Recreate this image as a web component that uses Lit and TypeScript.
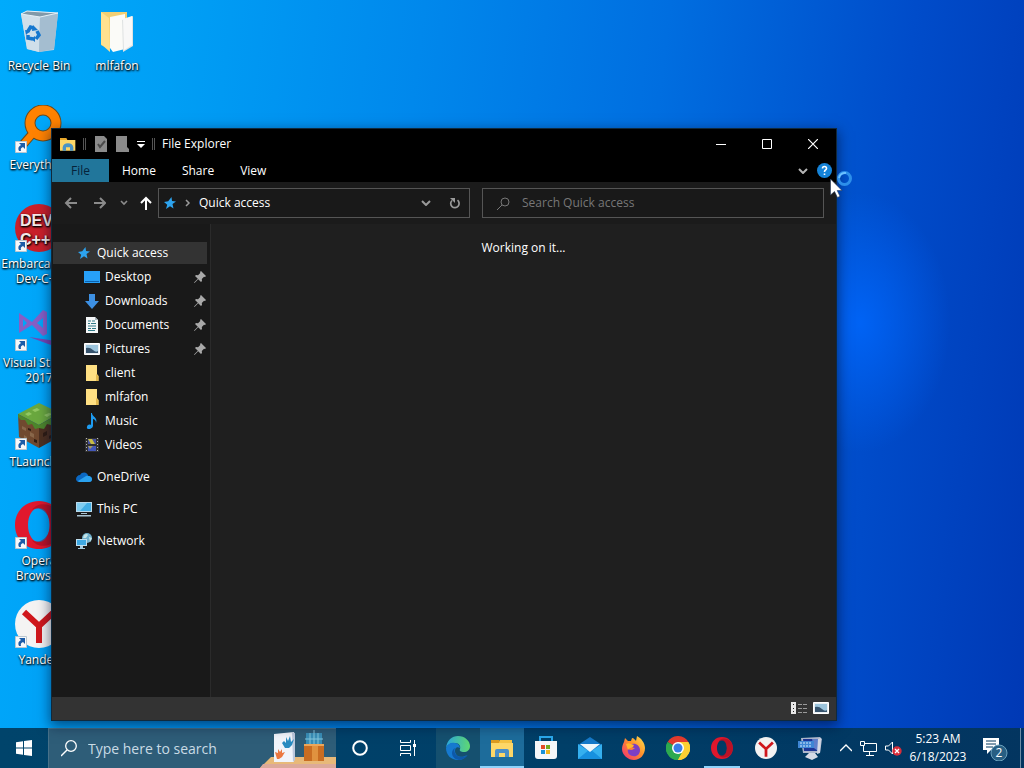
import { LitElement, html, css, nothing, TemplateResult } from "lit";
import { customElement } from "lit/decorators.js";
import { classMap } from "lit/directives/class-map.js";

const folder = html`<svg width="16" height="16" viewBox="0 0 16 16"><path d="M2 0h11v9l1.500 2v5H2z" fill="#ffe083"/><path d="M12 9l2.500 2v5H12z" fill="#e3b94e"/></svg>`;

const explorer = html`<svg width="24" height="24" viewBox="0 0 24 24"><path d="M1 4h8l2 2h11v4H1z" fill="#dc9b20"/><path d="M1 7h22v14H1z" fill="#fdd768"/><path d="M10 4h12v3H9z" fill="#f5c344"/><path d="M5 21v-6q0-2 2-2h10q2 0 2 2v6h-4v-4H9v4z" fill="#4a8fc8"/></svg>`;

const opera = (size: number) => html`<svg width=${size} height=${size} viewBox="0 0 48 48"><path fill-rule="evenodd" fill="#e0182d" d="M24 0C10 0 0 10.500 0 24s10 24 24 24 24-10.500 24-24S38 0 24 0zm0 7c6.500 0 10.500 7.500 10.500 17S30.500 41 24 41s-11-7.500-11-17S17.500 7 24 7z"/><path d="M17 9C22 1 34 2 41 8c9 9 9 23 0 32-7 6-19 7-24-1 8 5 18-3 18-15S25 4 17 9z" fill="#9d0e20" opacity=".55"/></svg>`;

const yandex = (size: number) => html`<svg width=${size} height=${size} viewBox="0 0 48 48"><circle cx="24" cy="24" r="24" fill="#f4f3f3"/><path d="M9 12l15 14 15-14M24 26v17" fill="none" stroke="#d0171c" stroke-width="6"/></svg>`;

const star = html`<svg width="14" height="14" viewBox="0 0 14 14"><path d="M8.500 1l.5 4 4 .5-3.500 2.500 1 4.500-3.500-2.200L3 13l1.200-4.300L1 6l4.200-.8z" fill="#2da3ee"/></svg>`;

const pin = html`<svg class="pin" width="12" height="12" viewBox="0 0 12 12"><path d="M7 0l5 5-1 1-1-.3L7.800 8 8 10l-1 1-2.800-2.800L.5 12 0 11.500l3.800-3.700L1 5l1-1 2 .2L6.300 2 6 1z" fill="#a9a9a9"/></svg>`;

const thumb = html`<svg width="16" height="12" viewBox="0 0 16 12"><path d="M.5.500h15v11H.5z" fill="#e9eef2" stroke="#fff"/><path d="M2 2h12v8H2z" fill="#9cc4dc"/><path d="M2 5q4-1 7 2t5 1v2H2z" fill="#36536d"/></svg>`;

const chevron = html`<svg width="10" height="6" viewBox="0 0 10 6"><path d="M1 1l4 4 4-4" fill="none" stroke="currentColor" stroke-width="2"/></svg>`;

const desktopIcons: { label: string; icon: TemplateResult; link?: boolean }[] = [
  {
    label: "Recycle Bin",
    icon: html`<svg width="48" height="48" viewBox="0 0 48 48"><path d="M6 8l6-3 31 2-4 37-15 2-12-3z" fill="#b9cfdf"/><path d="M6 8l19 3-1 35-12-3z" fill="#d0dfea"/><path d="M25 11l18-4-4 36-15 3z" fill="#a4bdd0"/><path d="M6 8l6-3 31 2-18 4z" fill="#8199a9" stroke="#e5f0f7"/><g fill="none" stroke="#1577cf" stroke-width="3.500"><path d="M12.500 26l3-5 3 1"/><path d="M22 25l2 4-3 4"/><path d="M18 33l-5-1v-3"/></g><path d="M18 19l5 5-6 1zM20 30l0 6-4-3zM10 24l5 1-4 4z" fill="#1577cf"/></svg>`,
  },
  {
    label: "Everything",
    link: true,
    icon: html`<svg width="48" height="48" viewBox="0 0 48 48"><circle cx="28" cy="18" r="13" fill="none" stroke="#6c4a1c" stroke-width="11"/><path d="M18 28L5 43" stroke="#6c4a1c" stroke-width="9"/><circle cx="28" cy="18" r="13" fill="none" stroke="#ff8201" stroke-width="9"/><path d="M19 27L6 42" stroke="#ff8201" stroke-width="7"/></svg>`,
  },
  {
    label: "Embarcadero Dev-C++",
    link: true,
    icon: html`<svg width="48" height="48" viewBox="0 0 48 48"><circle cx="24" cy="24" r="24" fill="#c9202a"/><g fill="#f5e9e9" font-family="Liberation Sans, sans-serif" font-weight="700" font-size="16"><text x="5" y="22">DEV</text><text x="5" y="41">C++</text></g></svg>`,
  },
  {
    label: "Visual Studio 2017",
    link: true,
    icon: html`<svg width="48" height="48" viewBox="0 0 48 48"><path d="M4 10l13 9L28 7l4 2v22l-4 2-11-11-13 8zM8 16v8l4-4zM28 15l-6 5 6 5z" fill="#865fc5" fill-rule="evenodd"/><path d="M14 34l34 5v6l-12-3z" fill="#7447b5"/></svg>`,
  },
  {
    label: "TLauncher",
    link: true,
    icon: html`<svg width="48" height="48" viewBox="0 0 48 48"><path d="M3 12l21-11 21 10-21 12z" fill="#6aa83f"/><path d="M3 12l21 11v23L4 35z" fill="#70492f"/><path d="M24 23l21-12-1 24-20 11z" fill="#4c3020"/><path d="M3 12l21 11 21-12v5l-3 3-3-1-3 5-4-1-3 5-5-1-4 1-3-5-4 1-3-5-4 0-3-3z" fill="#4d862c"/><g fill="#89674a"><path d="M7 24l4 2v3l-4-2zM15 30l4 2v4l-4-2zM9 33l3 2v2l-3-1z"/></g><g fill="#2f1d13"><path d="M28 31l4-2v4l-4 2zM36 25l4-2v4l-4 2zM13 26l3 1v2l-3-1zM34 34l4-2v3l-4 2zM19 37l3 1v3l-3-1z"/></g><g fill="#91c763"><path d="M17 8l5-2 3 2-5 2zM29 13l5-2 3 1-5 3zM10 12l4-2 3 2-4 2z"/></g></svg>`,
  },
  { label: "Opera Browser", link: true, icon: opera(48) },
  { label: "Yandex", link: true, icon: yandex(48) },
];

const pinnedItems: { label: string; icon: TemplateResult; pinned?: boolean }[] = [
  { label: "Desktop", pinned: true, icon: html`<svg width="16" height="12" viewBox="0 0 16 12"><path d="M0 0h16v12H0z" fill="#27a0f8"/><path d="M1 10h14v1H1z" fill="#0c62ae"/></svg>` },
  { label: "Downloads", pinned: true, icon: html`<svg width="16" height="16" viewBox="0 0 16 16"><path d="M5 1h6v7h4l-7 8-7-8h4z" fill="#3d90e3"/></svg>` },
  { label: "Documents", pinned: true, icon: html`<svg width="16" height="16" viewBox="0 0 16 16"><path d="M2 0h9l3 3v13H2z" fill="#f5f7f8"/><path d="M11 0l3 3h-3z" fill="#aab6bd"/><path d="M4 4h3M8 4h3M4 6.500h2M7 6.500h5M4 9h8M4 11.500h3M8 11.500h4M4 13.500h7" stroke="#327b88" stroke-width="1.200"/></svg>` },
  { label: "Pictures", pinned: true, icon: thumb },
  { label: "client", icon: folder },
  { label: "mlfafon", icon: folder },
  { label: "Music", icon: html`<svg width="16" height="16" viewBox="0 0 16 16"><path d="M8 0c0 4 6 4 4 10 0-3-2-4-3-4v7c-1 4-7 4-6 1 0-2 2-3 4-2V0z" fill="#1d9bf0"/></svg>` },
  { label: "Videos", icon: html`<svg width="16" height="16" viewBox="0 0 16 16"><path d="M1 1h14v14H1z" fill="#303030"/><path d="M2.500 1v15M13.500 1v15" stroke="#b5b5b5" stroke-width="1" stroke-dasharray="1 2"/><path d="M4 2h8v5H4z" fill="#4651a3"/><path d="M4 2h4l3 5H7z" fill="#c8bc43"/><path d="M4 9h8v5H4z" fill="#4357b8"/><path d="M4 9h5l-3 3z" fill="#a59a60"/></svg>` },
];

const roots: { label: string; icon: TemplateResult }[] = [
  { label: "OneDrive", icon: html`<svg width="16" height="12" viewBox="0 0 16 12"><path d="M4 4c2-4 8-3 8 1 3 0 4 2 4 3 0 2-1 3-3 3H3c-2 0-3-2-3-3 0-2 2-4 4-4z" fill="#0b68c2"/><path d="M2 10l8-5c3-1 6 1 6 3s-1 3-3 3H3z" fill="#2aa1ee"/></svg>` },
  { label: "This PC", icon: html`<svg width="16" height="16" viewBox="0 0 16 16"><path d="M0 1h16v10H0z" fill="#b9d9ea"/><path d="M1 2h14v8H1z" fill="#43aee4"/><path d="M1 2h10L4 10H1z" fill="#80cdf0"/><path d="M5 12h6v1H5zM1 14h14v1.500H1z" fill="#a8c3d2"/></svg>` },
  { label: "Network", icon: html`<svg width="16" height="16" viewBox="0 0 16 16"><circle cx="11" cy="5" r="5" fill="#6fb0cd"/><path d="M8 2q3-2 4 0l-2 3H7zM13 4l3 1-2 4z" fill="#c4e3e6"/><path d="M0 6h11v7H0z" fill="#c0dfef"/><path d="M1 7h9v5H1z" fill="#3fa9e3"/><path d="M4 13h3v2h2v1H2v-1h2z" fill="#a8cde0"/></svg>` },
];

const apps: { name: string; state?: string; icon: TemplateResult }[] = [
  { name: "Microsoft Edge", state: "hover", icon: html`<svg width="24" height="24" viewBox="0 0 24 24"><defs><linearGradient id="eg" x1="0" y1="0" x2="1" y2="0"><stop offset="0" stop-color="#2ba7df"/><stop offset="1" stop-color="#5fd871"/></linearGradient></defs><path d="M0 12C1 4 6 0 12 0c7 0 12 5 12 10 0 4-3 6-6 6-3 0-5-1-4-3 1-3-1-6-5-6-4 0-8 2-9 5z" fill="url(#eg)"/><path d="M0 12c1-4 5-6 9-5 3 0 5 3 5 5-3-2-5 0-5 3 0 5 6 8 12 4-2 3-5 5-9 5C5 24 0 19 0 12z" fill="#1679cf"/><path d="M9 12c-2 4 1 9 7 9 2 0 4-1 6-2-2 3-6 5-9 5-5-1-7-4-7-7 0-2 1-4 3-5z" fill="#0d58a9"/></svg>` },
  { name: "File Explorer", state: "active", icon: explorer },
  { name: "Microsoft Store", icon: html`<svg width="24" height="24" viewBox="0 0 24 24"><path d="M6 6V1h12v5" fill="none" stroke="#2aa8ec" stroke-width="2"/><path d="M1 5h22v15q0 3-3 3H4q-3 0-3-3z" fill="#f5f7f9"/><path d="M7 9h4v4H7z" fill="#e34c26"/><path d="M12 9h4v4h-4z" fill="#75ac1c"/><path d="M7 14h4v4H7z" fill="#1a91d6"/><path d="M12 14h4v4h-4z" fill="#f0b41c"/></svg>` },
  { name: "Mail", icon: html`<svg width="24" height="24" viewBox="0 0 24 24"><path d="M0 9l12-8 12 8v14H0z" fill="#1679c9"/><path d="M0 8l12 8 12-8v15H0z" fill="#35b0ef"/><path d="M0 23l12-10 12 10z" fill="#1790df"/><path d="M2 8h20l-10 8z" fill="#eff7fb"/></svg>` },
  { name: "Firefox", icon: html`<svg width="24" height="24" viewBox="0 0 24 24"><defs><linearGradient id="fg" x1="1" y1="0" x2="0" y2="1"><stop offset="0" stop-color="#ffe650"/><stop offset=".45" stop-color="#ff922b"/><stop offset="1" stop-color="#f0257a"/></linearGradient></defs><path d="M2 6l1-4 3 3 3 0 1-3c2 0 3 2 4 3l1-5c4 2 8 7 8 12 0 7-5 12-11 12S0 19 0 13c0-3 1-5 2-7z" fill="url(#fg)"/><path d="M8 9c4-3 10 0 10 5s-4 7-7 6c-4 0-6-4-5-7 2 2 5 1 7-1-3 0-4-2-5-3z" fill="#7b3fc4"/><path d="M4 8c3-2 5 0 8 1l-1 2c-2 1-4 1-5 3z" fill="#ffb52b"/></svg>` },
  { name: "Google Chrome", icon: html`<svg width="24" height="24" viewBox="0 0 24 24"><path d="M12 12L1.600 6A12 12 0 0 1 22.400 6z" fill="#e33b2e"/><path d="M12 12L1.600 6A12 12 0 0 0 12 24z" fill="#2da94f"/><path d="M12 12h10.400V6A12 12 0 0 1 12 24z" fill="#fdd032"/><path d="M1.600 6L7 15l5 3 5-3-5 9A12 12 0 0 1 1.600 6z" fill="#2da94f"/><path d="M12 6h10.400L17 12z" fill="#e33b2e"/><path d="M12 6h10.400A12 12 0 0 1 12 24l5-9z" fill="#fdd032"/><circle cx="12" cy="12" r="6" fill="#fff"/><circle cx="12" cy="12" r="4.500" fill="#397ee8"/></svg>` },
  { name: "Opera", state: "running", icon: opera(22) },
  { name: "Yandex Browser", icon: yandex(22) },
  { name: "Remote Computer", icon: html`<svg width="24" height="24" viewBox="0 0 24 24"><path d="M3 2l19-1 2 2-2 14H5z" fill="#aeb7cd"/><path d="M5 3h16l-1 12H6z" fill="#1d3596"/><path d="M14 3h7l-1 12-4-3z" fill="#5f7fcb"/><path d="M0 5h16v7H0z" fill="#3f86d5"/><path d="M2 7h12M2 10h12" stroke="#d3e9fb" stroke-dasharray="2 1"/><path d="M11 17h6l3 4-6 3-7-3z" fill="#d5dae6"/><path d="M20 3l3-1-1 15-3 1z" fill="#d4d8e4"/></svg>` },
];

@customElement("desktop-icon")
export class DesktopIcon extends LitElement {
  static properties = { label: {}, icon: { attribute: false }, link: { type: Boolean } };
  declare label: string;
  declare icon: TemplateResult;
  declare link: boolean;

  static styles = css`
    :host { display: block; width: 78px; height: 99px; }
    .item { display: flex; flex-direction: column; align-items: center; gap: 4px; width: 100%; padding: 6px 0 0; border: 0; background: none; color: #fff; font: 12px/15px "Open Sans", "Noto Sans", sans-serif; text-shadow: 1px 1px 2px #000, 0 1px 2px #000; }
    .glyph { position: relative; display: grid; width: 48px; height: 48px; }
    .arrow { position: absolute; left: 0; bottom: 0; }
  `;

  render() {
    return html`<button class="item">
      <span class="glyph">${this.icon}${this.link
        ? html`<svg class="arrow" width="12" height="12" viewBox="0 0 12 12"><path d="M.5.500h11v11H.5z" fill="#f6f8fa" stroke="#b9c6d0"/><path d="M4 2h6v6L8 6q-3 1-2 4H4Q2 6 6 4z" fill="#1c5ca8"/></svg>`
        : nothing}</span>
      <span>${this.label}</span>
    </button>`;
  }
}

@customElement("explorer-window")
export class ExplorerWindow extends LitElement {
  static styles = css`
    :host { display: flex; flex-direction: column; color: #fff; background: #1f1f1f; font: 12px/16px "Open Sans", "Noto Sans", sans-serif; box-shadow: 0 0 0 1px #10293c, 0 4px 12px 2px rgba(0, 10, 40, .55); }
    * { box-sizing: border-box; }
    svg { display: block; flex: none; }
    button { display: flex; align-items: center; padding: 0; border: 0; background: none; color: inherit; font: inherit; }
    .title { display: flex; align-items: center; height: 30px; background: #000; }
    .quick { display: flex; align-items: center; gap: 8px; padding: 0 8px; }
    .sep { width: 3px; height: 12px; margin: 0 -1px; border: solid #555; border-width: 0 1px; }
    .name { margin: 0; font: inherit; }
    .caption { display: flex; margin-left: auto; height: 100%; }
    .caption button { width: 46px; justify-content: center; }
    .tabs { display: flex; height: 23px; background: #000; }
    .tab { padding: 0 13px; }
    .file { padding: 0 19px; color: #06233a; background: #21769b; }
    .help { display: flex; align-items: center; gap: 9px; margin-left: auto; padding-right: 4px; color: #b5b5b5; }
    .nav { display: grid; grid-template-columns: 94px minmax(0, 312fr) minmax(0, 354fr); align-items: center; height: 42px; padding: 0 12px; background: #1b1b1b; color: #8b8b8b; }
    .moves { display: flex; align-items: center; gap: 14px; }
    .moves .up { margin-left: -2px; color: #fff; }
    .box { display: flex; align-items: center; height: 30px; border: 1px solid #555; background: #191919; }
    .address { gap: 6px; padding: 0 8px 0 4px; color: #9a9a9a; }
    .address .here { color: #fff; }
    .address .drop { margin-left: auto; }
    .address .reload { margin-left: 12px; }
    .search { margin-left: 12px; gap: 12px; padding: 0 14px; color: #777; }
    .search input { flex: 1; min-width: 0; padding: 0; border: 0; background: none; color: #fff; font: inherit; outline: 0; }
    .search input::placeholder { color: #777; opacity: 1; }
    .body { display: flex; flex: 1; min-height: 0; }
    .side { display: flex; flex-direction: column; gap: 10px; width: 159px; padding: 18px 3px 0 1px; border-right: 1px solid #2b2b2b; background: #191919; }
    .group { display: flex; flex-direction: column; gap: 2px; margin: 0; padding: 0; list-style: none; }
    .row { width: 100%; height: 22px; gap: 5px; padding-left: 23px; }
    .row.child { padding-left: 31px; }
    .row.current { background: #333; }
    .mark { display: grid; place-items: center; width: 16px; height: 16px; }
    .pin { margin: 0 1px 0 auto; }
    .main { flex: 1; padding: 16px 0; text-align: center; }
    .main p { margin: 0; }
    .status { display: flex; align-items: center; justify-content: flex-end; gap: 6px; height: 23px; padding: 0 7px 2px 0; background: #333; }
  `;

  private row(label: string, icon: TemplateResult, child = false, current = false, pinned = false) {
    return html`<li><button class=${classMap({ row: true, child, current })}><span class="mark">${icon}</span><span>${label}</span>${pinned ? pin : nothing}</button></li>`;
  }

  render() {
    return html`
      <header class="title">
        <div class="quick">
          <svg width="16" height="16" viewBox="0 0 24 24"><path d="M0 3h9l2 3h12v16H0z" fill="#fdd768"/><path d="M0 3h9l2 3H0z" fill="#e9a82b"/><path d="M4 22v-5q1-6 8-6t8 6v5h-5v-5H9v5z" fill="#4a94c5"/></svg>
          <span class="sep"></span>
          <button aria-label="Properties"><svg width="14" height="16" viewBox="0 0 14 16"><path d="M2 0h9l3 3v13H2z" fill="#8b8b8b"/><path d="M5 8l2 3 5-6" fill="none" stroke="#4b4b4b" stroke-width="2"/></svg></button>
          <button aria-label="New folder"><svg width="14" height="16" viewBox="0 0 14 16"><path d="M1 0h11v11l2 2v3H1z" fill="#8b8b8b"/></svg></button>
          <button aria-label="Customize Quick Access Toolbar"><svg width="8" height="7" viewBox="0 0 8 7"><path d="M0 0h8v1H0zM0 3h8L4 7z" fill="#fff"/></svg></button>
          <span class="sep"></span>
          <h1 class="name">File Explorer</h1>
        </div>
        <div class="caption">
          <button aria-label="Minimize"><svg width="10" height="10" viewBox="0 0 10 10"><path d="M0 5.500h10" stroke="#fff"/></svg></button>
          <button aria-label="Maximize"><svg width="10" height="10" viewBox="0 0 10 10"><path d="M.5.500h9v9h-9z" fill="none" stroke="#fff"/></svg></button>
          <button aria-label="Close"><svg width="10" height="10" viewBox="0 0 10 10"><path d="M0 0l10 10M10 0L0 10" stroke="#fff" stroke-width="1.200"/></svg></button>
        </div>
      </header>
      <nav class="tabs">
        <button class="tab file">File</button><button class="tab">Home</button><button class="tab">Share</button><button class="tab">View</button>
        <div class="help">
          <button aria-label="Expand the Ribbon">${chevron}</button>
          <button aria-label="Help"><svg width="15" height="15" viewBox="0 0 15 15"><circle cx="7.500" cy="7.500" r="7.500" fill="#1583d8"/><path d="M5.500 5.500q0-2 2-2t2 2q0 1-1 1.500t-1 2M7.500 10.500v1.500" fill="none" stroke="#fff" stroke-width="1.600"/></svg></button>
        </div>
      </nav>
      <div class="nav">
        <div class="moves">
          <button aria-label="Back"><svg width="14" height="12" viewBox="0 0 14 12"><path d="M13 6H2M7 1L2 6l5 5" fill="none" stroke="currentColor" stroke-width="2"/></svg></button>
          <button aria-label="Forward"><svg width="14" height="12" viewBox="0 0 14 12"><path d="M2 6h11M8 1l5 5-5 5" fill="none" stroke="currentColor" stroke-width="2"/></svg></button>
          <button aria-label="Recent locations"><svg width="8" height="6" viewBox="0 0 8 6"><path d="M1 1l3 3 3-3" fill="none" stroke="currentColor" stroke-width="1.600"/></svg></button>
          <button class="up" aria-label="Up"><svg width="12" height="14" viewBox="0 0 12 14"><path d="M6 14V2M1 7l5-5 5 5" fill="none" stroke="currentColor" stroke-width="2"/></svg></button>
        </div>
        <div class="box address">
          ${star}
          <svg width="10" height="8" viewBox="0 0 10 8"><path d="M3 1l3 3-3 3" fill="none" stroke="currentColor" stroke-width="1.500"/></svg>
          <button class="here">Quick access</button>
          <button class="drop" aria-label="Previous locations">${chevron}</button>
          <button class="reload" aria-label="Refresh"><svg width="12" height="12" viewBox="0 0 12 12"><path d="M3 3.500a4.200 4.200 0 1 0 5.500-.3" fill="none" stroke="currentColor" stroke-width="1.700"/><path d="M1 1h5v5z" fill="currentColor"/></svg></button>
        </div>
        <label class="box search">
          <svg width="13" height="13" viewBox="0 0 13 13"><circle cx="8" cy="5" r="4" fill="none" stroke="currentColor"/><path d="M5 8l-5 5" stroke="currentColor"/></svg>
          <input type="text" placeholder="Search Quick access" aria-label="Search Quick access" />
        </label>
      </div>
      <div class="body">
        <aside class="side">
          <ul class="group">
            ${this.row("Quick access", star, false, true)}
            ${pinnedItems.map((i) => this.row(i.label, i.icon, true, false, i.pinned))}
          </ul>
          ${roots.map((r) => html`<ul class="group">${this.row(r.label, r.icon)}</ul>`)}
        </aside>
        <main class="main"><p>Working on it...</p></main>
      </div>
      <footer class="status">
        <button aria-label="Details"><svg width="16" height="12" viewBox="0 0 16 12"><path d="M0 0h5v12H0z" fill="#e8e8e8"/><path d="M2 2h1v1H2zM2 6h1v1H2zM2 9h1v1H2z" fill="#222"/><path d="M7 2.500h9M7 6.500h9M7 10.500h9" stroke="#9a9a9a" stroke-dasharray="4 1"/></svg></button>
        <button aria-label="Large icons">${thumb}</button>
      </footer>`;
  }
}

@customElement("task-bar")
export class TaskBar extends LitElement {
  static styles = css`
    :host { display: flex; height: 40px; color: #fff; background: linear-gradient(90deg, #00446b, #003f68 55%, #033560); font: 12px/18px "Open Sans", "Noto Sans", sans-serif; }
    * { box-sizing: border-box; }
    svg { display: block; flex: none; }
    button { display: flex; align-items: center; justify-content: center; padding: 0; border: 0; background: none; color: inherit; font: inherit; }
    .wide { width: 48px; }
    .search { display: flex; align-items: center; gap: 11px; width: 288px; padding-left: 12px; border: 1px solid #477189; border-width: 1px 0 0 1px; background: #2e5d78; }
    .search input { flex: 1; min-width: 0; padding: 0; border: 0; background: none; color: #fff; font: 14px/20px "Open Sans", "Noto Sans", sans-serif; outline: 0; }
    .search input::placeholder { color: #c9dbe5; opacity: 1; }
    .apps { display: flex; margin-left: 4px; }
    .app { width: 44px; border: solid transparent; border-width: 2px 0; }
    .app.hover { background: #15506f; }
    .app.active { background: #1d6c9b; border-bottom-color: #8fd3fb; }
    .app.running { border-bottom: 0; background: linear-gradient(#8fd3fb, #8fd3fb) center bottom / 36px 2px no-repeat; padding-bottom: 2px; }
    .tray { display: flex; align-items: center; gap: 8px; margin-left: auto; padding-right: 3px; }
    .clock { width: 56px; flex-direction: column; white-space: nowrap; }
    .notice { margin: 0 4px 0 8px; }
    .peek { width: 1px; height: 40px; background: #6c8da6; }
  `;

  render() {
    return html`
      <button class="wide" aria-label="Start"><svg width="16" height="16" viewBox="0 0 16 16"><path d="M0 2.200L7 1.200v6.300H0zM8 1l8-1v7.500H8zM0 8.500h7v6.300l-7-1zM8 8.500h8V16l-8-1z" fill="#fff"/></svg></button>
      <label class="search">
        <svg width="16" height="17" viewBox="0 0 16 17"><circle cx="10" cy="6" r="5.300" fill="none" stroke="#fff" stroke-width="1.300"/><path d="M6 10l-6 6" stroke="#fff" stroke-width="1.400"/></svg>
        <input type="text" placeholder="Type here to search" aria-label="Type here to search" />
        <svg width="76" height="39" viewBox="0 0 76 39"><path d="M0 39l11-11h65v11z" fill="#e8b979"/><path d="M0 39l3-4h73v4z" fill="#dca99a"/><path d="M14 5l20-2v30H14z" fill="#f1f4fa"/><path d="M32 3l3 1v27l-2 2z" fill="#bdc9dd"/><path d="M22 14l2-2 2 2 0-6 2 4 2-5 1 6 3-3-2 6-3 3h-4z" fill="#298bc0"/><path d="M15 23l3 1 0-4 2 3 2-3 0 4 3-1-3 5-3 2h-2z" fill="#ec7840"/><path d="M44 15h20v17H44z" fill="#c96d22"/><path d="M52 15h6v17h-6z" fill="#e0923f"/><path d="M46 4h16v11H46z" fill="#398eb7"/><path d="M50 4v11M54 1v14M58 4v11M45 10h18" stroke="#85c6dc"/><path d="M44 15h20v2H44z" fill="#eca659"/></svg>
      </label>
      <button class="wide" aria-label="Cortana"><svg width="16" height="16" viewBox="0 0 16 16"><circle cx="8" cy="8" r="6.800" fill="none" stroke="#fff" stroke-width="2"/></svg></button>
      <button class="wide" aria-label="Task View"><svg width="16" height="16" viewBox="0 0 16 16"><g fill="none" stroke="#fff"><path d="M.5 0v2.500h10V0M.5 16v-2.500h10V16M.5 5.500h10v5H.5zM14.500 0v16"/></g><path d="M13 4h3v3h-3z" fill="#fff"/></svg></button>
      <nav class="apps">
        ${apps.map((a) => html`<button class=${classMap({ app: true, [a.state ?? "idle"]: true })} aria-label=${a.name}>${a.icon}</button>`)}
      </nav>
      <div class="tray">
        <button aria-label="Show hidden icons"><svg width="12" height="8" viewBox="0 0 12 8"><path d="M0 7l6-6 6 6" fill="none" stroke="#fff" stroke-width="1.400"/></svg></button>
        <button aria-label="Network"><svg width="17" height="15" viewBox="0 0 17 15"><g fill="none" stroke="#fff"><path d="M5 2.500h11.500v8H3.500V6M9.500 11v3M6 14.500h8M.5.500h4v4h-4zM3.500 5v4"/></g></svg></button>
        <button aria-label="Volume"><svg width="17" height="15" viewBox="0 0 17 15"><path d="M.5 5h3l4-4v12l-4-4h-3z" fill="none" stroke="#fff"/><circle cx="12" cy="10" r="4.700" fill="#d92d3a"/><path d="M10 8l4 4M14 8l-4 4" stroke="#fff" stroke-width="1.300"/></svg></button>
        <button class="clock"><span>5:23 AM</span><span>6/18/2023</span></button>
        <button class="notice" aria-label="Notifications, 2 new"><svg width="26" height="26" viewBox="0 0 26 26"><path d="M1 3h16v12H9l-4 4v-4H1z" fill="#fff"/><path d="M4 6h10M4 9h10M4 12h7" stroke="#03395f"/><circle cx="17" cy="18" r="8" fill="#285f83" stroke="#6ba1bd"/><text x="17" y="22" text-anchor="middle" fill="#fff" font-family="Open Sans, sans-serif" font-size="12">2</text></svg></button>
        <span class="peek"></span>
      </div>`;
  }
}

@customElement("app-root")
export class AppRoot extends LitElement {
  static styles = css`
    :host { display: grid; grid-template-rows: 1fr auto; height: 100vh; overflow: hidden;
      background:
        radial-gradient(ellipse 90px 130px at 84% 42%, rgba(0, 104, 255, .8), rgba(0, 90, 240, 0)),
        linear-gradient(97deg, #00abfc 0%, #009ff5 16%, #0088ec 38%, #006ee0 60%, #004cca 82%, #0038b4 100%); }
    .desk { position: relative; min-height: 0; }
    .icons { display: grid; grid-auto-flow: column; grid-template-rows: repeat(7, 99px); justify-content: start; }
    .window { position: absolute; inset: 129px 188px 8px 52px; }
    .cursor { position: absolute; left: 830px; top: 170px; }
  `;

  render() {
    return html`
      <div class="desk">
        <div class="icons">
          ${desktopIcons.map((d) => html`<desktop-icon .label=${d.label} .icon=${d.icon} ?link=${d.link}></desktop-icon>`)}
          <desktop-icon label="mlfafon" .icon=${html`<svg width="48" height="48" viewBox="0 0 48 48"><path d="M8 6h26v36H14l-6-3z" fill="#f2cf73"/><path d="M17 11l15-3v35l-12 3-3-4z" fill="#fbfbf8"/><path d="M29 14l11-4v30l-10 6z" fill="#dfe2e2"/><path d="M30 13l9-3v29l-8 5z" fill="#f8f8f8"/><path d="M8 6l8 6 1 34-9-8z" fill="#ffe18f"/></svg>`}></desktop-icon>
        </div>
        <explorer-window class="window"></explorer-window>
        <svg class="cursor" width="24" height="28" viewBox="0 0 24 28"><circle cx="14.500" cy="8.500" r="6" fill="none" stroke="#2d8fea" stroke-width="3"/><path d="M9 8a6 6 0 0 1 7-5" fill="none" stroke="#6cc0ff" stroke-width="2"/><path d="M.5 9v16l4-3.500 3 6 2.500-1.200-2.800-5.800H12z" fill="#fff" stroke="#22385a" stroke-width=".6"/></svg>
      </div>
      <task-bar></task-bar>`;
  }
}
